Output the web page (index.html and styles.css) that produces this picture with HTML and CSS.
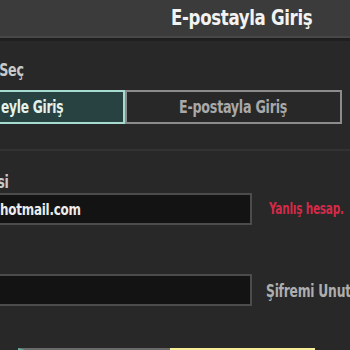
FILE: index.html
```html
<!DOCTYPE html>
<html lang="tr">
<head>
<meta charset="utf-8">
<link rel="stylesheet" href="styles.css">
</head>
<body>
<header class="topbar">
  <h1 class="title"><span class="cond">E-postayla Giriş</span></h1>
</header>
<main class="panel">
  <div class="label label-method"><span class="cond">Giriş Yöntemi Seç</span></div>
  <div class="tabs">
    <div class="tab tab-active"><span class="cond">eyle Giriş</span></div>
    <div class="tab"><span class="cond mid">E-postayla Giriş</span></div>
  </div>
  <div class="divider"></div>
  <div class="label label-email"><span class="cond">E-posta Adresi</span></div>
  <div class="row">
    <div class="field field-email"><span class="cond">hotmail.com</span></div>
    <div class="hint hint-error"><span class="cond">Yanlış hesap.</span></div>
  </div>
  <div class="row row-pass">
    <div class="field field-pass"></div>
    <div class="hint"><span class="cond">Şifremi Unuttum</span></div>
  </div>
  <div class="buttons">
    <div class="btn btn-cancel"></div>
    <div class="btn btn-ok"></div>
  </div>
</main>
</body>
</html>
```
FILE: styles.css
```css
* { box-sizing: border-box; }
html, body { margin: 0; padding: 0; }
body {
  width: 350px;
  height: 350px;
  overflow: hidden;
  background: #282828;
  font-family: "DejaVu Sans Condensed", "DejaVu Sans", sans-serif;
  font-weight: bold;
}
.cond {
  display: inline-block;
  white-space: nowrap;
  transform: scaleX(0.83);
  transform-origin: left center;
}
.cond.mid { transform-origin: center center; }
.topbar {
  height: 41px;
  background: #3b3b3b;
  border-bottom: 3px solid #1f1f1f;
  box-shadow: inset 0 -2px 0 #474747;
  display: flex;
  align-items: center;
  padding-left: 171px;
  padding-bottom: 4px;
}
.title {
  margin: 0;
  font-size: 22px;
  color: #f2f2f2;
  letter-spacing: -0.4px;
  white-space: nowrap;
}
.title .cond { transform: scaleX(0.84); }
.panel {
  margin-left: -92px;
  width: 450px;
  padding-top: 19px;
}
.label {
  color: #c9c9c9;
  font-size: 17px;
  line-height: 20px;
  letter-spacing: -0.3px;
}
.label-method { height: 30px; margin-left: -5px; }
.tabs {
  display: flex;
  width: 434px;
  height: 34px;
}
.tab {
  width: 50%;
  flex-shrink: 0;
  border: 2px solid #8c8c8c;
  display: flex;
  align-items: center;
  justify-content: center;
  color: #a9a9a9;
  font-size: 17px;
  letter-spacing: -0.3px;
}
.tab-active {
  background: #274240;
  border-color: #a6dccf;
  color: #e4f2ee;
  justify-content: flex-start;
  padding-left: 91px;
}
.tab-active .cond { transform: scaleX(0.8); }
.divider {
  height: 2px;
  background: #323232;
  margin: 25px 0 21px;
}
.label-email { height: 21px; }
.row {
  display: flex;
  align-items: center;
  gap: 17px;
  height: 32px;
}
.row-pass { margin-top: 49px; }
.field {
  width: 344px;
  flex-shrink: 0;
  height: 32px;
  background: #131313;
  border: 2px solid #4c4c4c;
  display: flex;
  align-items: center;
  padding-left: 90px;
  color: #ececec;
  font-size: 16px;
  letter-spacing: -0.3px;
}
.hint {
  color: #aeaeae;
  font-size: 16px;
  letter-spacing: -0.3px;
  white-space: nowrap;
}
.hint-error { color: #d52a47; font-size: 15px; }
.hint-error .cond { transform: scaleX(0.78); }
.row-pass .hint { margin-left: -3px; font-size: 18px; }
.row-pass .hint .cond { transform: scaleX(0.76); }
.buttons {
  display: flex;
  margin-top: 42px;
  padding-left: 110px;
}
.btn { height: 3px; }
.btn-cancel {
  width: 152px;
  background: #4a4a4a;
  border-top: 2px solid #6a6a6a;
  border-left: 7px solid #5fb3a6;
}
.btn-ok {
  width: 145px;
  background: #e9d23a;
  border-top: 2px solid #f7ef9a;
}
```
